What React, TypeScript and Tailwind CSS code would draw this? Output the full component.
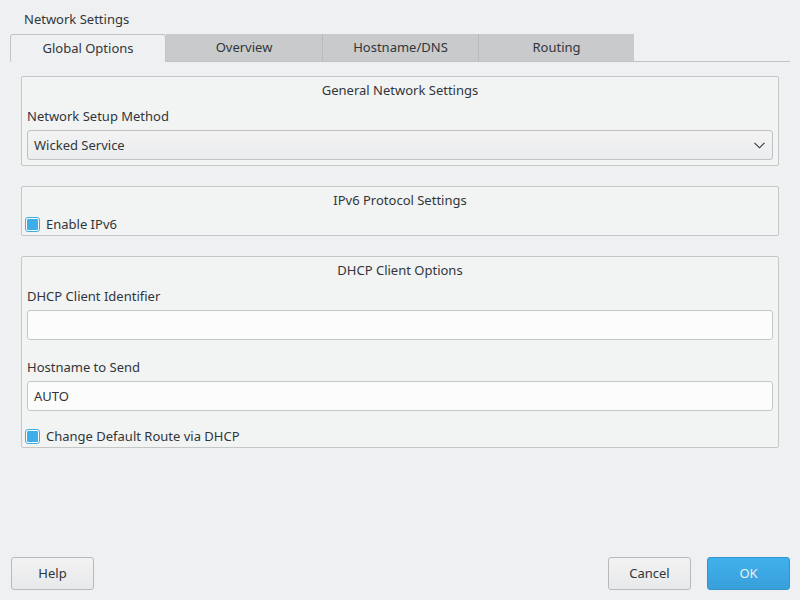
import { ReactNode } from 'react';

const font = { fontFamily: '"Noto Sans", "Open Sans", sans-serif' };

function Tab({ label, active, w }: { label: string; active?: boolean; w: string }) {
  if (active) {
    return (
      <div
        className={`${w} h-[28px] flex items-center justify-center rounded-t-[3px] border border-b-0 border-[#c2c3c4] bg-[#eff0f1] text-[#31363b]`}
      >
        {label}
      </div>
    );
  }
  return (
    <div
      className={`${w} h-[27px] flex items-center justify-center border-l border-[#b9babb] bg-[#c9cacb] text-[#31363b] first:border-l-0`}
    >
      {label}
    </div>
  );
}

function GroupBox({ title, children }: { title: string; children: ReactNode }) {
  return (
    <div className="mx-[21px] border border-[#c5c6c7] rounded-[2px] bg-[#f2f3f3] px-[5px] pt-[4px]">
      <div className="h-[18px] pt-[2px] flex items-center justify-center">{title}</div>
      {children}
    </div>
  );
}

function Checkbox({ label }: { label: string }) {
  return (
    <div className="h-[18px] flex items-center -ml-[2px]">
      <div className="w-[15px] h-[15px] rounded-[3px] border border-[#3daee9] bg-[#fcfcfc] flex items-center justify-center">
        <div className="w-[11px] h-[11px] rounded-[1px] bg-[#3daee9]" />
      </div>
      <span className="ml-[6px] pt-[1px]">{label}</span>
    </div>
  );
}

function TextField({ value }: { value?: string }) {
  return (
    <div className="h-[30px] border border-[#c6c7c8] rounded-[3px] bg-[#fcfcfc] flex items-center px-[6px] pt-[1px]">
      {value}
    </div>
  );
}

function Button({ label, primary }: { label: string; primary?: boolean }) {
  return (
    <div
      className={
        primary
          ? 'w-[83px] h-[33px] rounded-[3px] border border-[#3295cc] bg-gradient-to-b from-[#40b1ec] to-[#389fda] text-[#eff0f1] flex items-center justify-center'
          : 'w-[83px] h-[33px] rounded-[3px] border border-[#b8b9ba] bg-gradient-to-b from-[#f2f2f3] to-[#e8e9ea] text-[#31363b] flex items-center justify-center'
      }
    >
      {label}
    </div>
  );
}

export default function App() {
  return (
    <div
      style={font}
      className="w-[800px] h-[600px] bg-[#eff0f1] text-[13px] text-[#31363b] flex flex-col overflow-hidden"
    >
      <div className="h-[28px] pt-[10px] pl-[24px] leading-[18px]">Network Settings</div>

      <div className="flex items-end px-[10px] mt-[6px]">
        <Tab label="Global Options" active w="w-[156px]" />
        <div className="flex items-end border-b border-[#c2c3c4] flex-1">
          <div className="flex">
            <Tab label="Overview" w="w-[156px]" />
            <Tab label="Hostname/DNS" w="w-[156px]" />
            <Tab label="Routing" w="w-[156px]" />
          </div>
        </div>
      </div>

      <div className="mt-[14px] flex flex-col gap-[20px]">
        <GroupBox title="General Network Settings">
          <div className="h-[18px] mt-[8px] pt-[2px] flex items-center">Network Setup Method</div>
          <div className="h-[30px] mt-[5px] mb-[5px] border border-[#c0c1c2] rounded-[3px] bg-gradient-to-b from-[#f3f3f4] to-[#ebeced] flex items-center justify-between pl-[6px] pr-[7px]">
            <span className="pt-[1px]">Wicked Service</span>
            <svg width="11" height="7" viewBox="0 0 11 7" fill="none">
              <path d="M0.5 0.8 L5.5 5.8 L10.5 0.8" stroke="#31363b" strokeWidth="1.1" />
            </svg>
          </div>
        </GroupBox>

        <GroupBox title="IPv6 Protocol Settings">
          <div className="mt-[6px] mb-[2px]">
            <Checkbox label="Enable IPv6" />
          </div>
        </GroupBox>

        <GroupBox title="DHCP Client Options">
          <div className="h-[18px] mt-[8px] pt-[2px] flex items-center">DHCP Client Identifier</div>
          <div className="mt-[5px]">
            <TextField />
          </div>
          <div className="h-[18px] mt-[18px] pt-[2px] flex items-center">Hostname to Send</div>
          <div className="mt-[5px]">
            <TextField value="AUTO" />
          </div>
          <div className="mt-[16px] mb-[2px]">
            <Checkbox label="Change Default Route via DHCP" />
          </div>
        </GroupBox>
      </div>

      <div className="flex-1" />

      <div className="flex items-center px-[11px] pr-[10px] mb-[10px] gap-[16px]">
        <Button label="Help" />
        <div className="flex-1" />
        <Button label="Cancel" />
        <Button label="OK" primary />
      </div>
    </div>
  );
}
